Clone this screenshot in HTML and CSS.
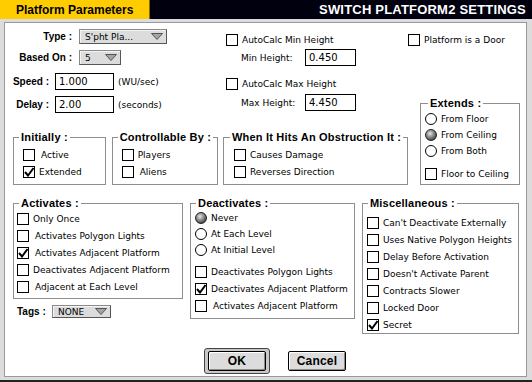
FILE: index.html
```html
<!DOCTYPE html>
<html lang="en">

<head>
    <meta charset="UTF-8" />
    <meta name="viewport" content="width=device-width, initial-scale=1.0" />
    <title>Switch Platform2 Settings</title>
    <link rel="stylesheet" href="styles.css">
</head>

<body>
    <div class="window">
        <!-- title bar -->
        <div class="titlebar">
            <div class="tab">Platform Parameters</div>
            <div class="title">SWITCH PLATFORM2 SETTINGS</div>
        </div>

        <div class="panel">
            <div class="top">
                <div class="top-main">
                    <div class="top-row">
                        <!-- type / speed fields -->
                        <div class="fields">
                            <div class="field field-type">
                                <span class="label label-popup">Type :</span>
                                <span class="popup popup-type">S'pht Pla...
                                    <svg class="arrow" width="12" height="7" viewBox="0 0 12 7"><polygon points="0.5,0.5 11.5,0.5 6,6.5" /></svg>
                                </span>
                            </div>
                            <div class="field field-based">
                                <span class="label label-popup">Based On :</span>
                                <span class="popup popup-based">5
                                    <svg class="arrow" width="12" height="7" viewBox="0 0 12 7"><polygon points="0.5,0.5 11.5,0.5 6,6.5" /></svg>
                                </span>
                            </div>
                            <div class="field field-speed">
                                <span class="label label-input">Speed :</span>
                                <span class="input input-speed">1.000</span>
                                <span class="unit">(WU/sec)</span>
                            </div>
                            <div class="field field-delay">
                                <span class="label label-input">Delay :</span>
                                <span class="input input-speed">2.00</span>
                                <span class="unit">(seconds)</span>
                            </div>
                        </div>

                        <!-- min / max heights -->
                        <div class="heights">
                            <div class="item"><span class="box"></span>AutoCalc Min Height</div>
                            <div class="height-row height-min">
                                <span class="height-label">Min Height:</span>
                                <span class="input input-height">0.450</span>
                            </div>
                            <div class="item item-max"><span class="box"></span>AutoCalc Max Height</div>
                            <div class="height-row height-max">
                                <span class="height-label">Max Height:</span>
                                <span class="input input-height">4.450</span>
                            </div>
                        </div>
                    </div>

                    <div class="groups">
                        <div class="group group-initially">
                            <div class="group-title">Initially :</div>
                            <div class="group-body">
                                <div class="item"><span class="box"></span><span class="pad">Active</span></div>
                                <div class="item"><span class="box checked"><svg width="10" height="10" viewBox="0 0 10 10"><path d="M1 5 L4 8.5 L9.5 1" /></svg></span>Extended</div>
                            </div>
                        </div>
                        <div class="group group-control">
                            <div class="group-title">Controllable By :</div>
                            <div class="group-body">
                                <div class="item"><span class="box"></span>Players</div>
                                <div class="item"><span class="box"></span><span class="pad">Aliens</span></div>
                            </div>
                        </div>
                        <div class="group group-obstruction">
                            <div class="group-title">When It Hits An Obstruction It :</div>
                            <div class="group-body">
                                <div class="item"><span class="box"></span>Causes Damage</div>
                                <div class="item"><span class="box"></span>Reverses Direction</div>
                            </div>
                        </div>
                    </div>
                </div>

                <div class="side">
                    <div class="item"><span class="box"></span>Platform is a Door</div>
                    <div class="group group-extends">
                        <div class="group-title">Extends :</div>
                        <div class="group-body">
                            <div class="item item-radio"><span class="radio"></span>From Floor</div>
                            <div class="item item-radio"><span class="radio on"></span>From Ceiling</div>
                            <div class="item item-radio"><span class="radio"></span>From Both</div>
                            <div class="item item-gap"><span class="box"></span>Floor to Ceiling</div>
                        </div>
                    </div>
                </div>
            </div>

            <div class="bottom">
                <div class="act-col">
                    <div class="group group-activates">
                        <div class="group-title">Activates :</div>
                        <div class="group-body">
                            <div class="item"><span class="box"></span>Only Once</div>
                            <div class="item"><span class="box"></span><span class="pad">Activates Polygon Lights</span></div>
                            <div class="item"><span class="box checked"><svg width="10" height="10" viewBox="0 0 10 10"><path d="M1 5 L4 8.5 L9.5 1" /></svg></span><span class="pad">Activates Adjacent Platform</span></div>
                            <div class="item"><span class="box"></span>Deactivates Adjacent Platform</div>
                            <div class="item"><span class="box"></span><span class="pad">Adjacent at Each Level</span></div>
                        </div>
                    </div>
                    <div class="field field-tags">
                        <span class="label">Tags :</span>
                        <span class="popup popup-tags">NONE
                            <svg class="arrow" width="12" height="7" viewBox="0 0 12 7"><polygon points="0.5,0.5 11.5,0.5 6,6.5" /></svg>
                        </span>
                    </div>
                </div>

                <div class="group group-deactivates">
                    <div class="group-title">Deactivates :</div>
                    <div class="group-body">
                        <div class="item item-radio"><span class="radio on"></span>Never</div>
                        <div class="item item-radio"><span class="radio"></span>At Each Level</div>
                        <div class="item item-radio"><span class="radio"></span>At Initial Level</div>
                        <div class="item item-gap"><span class="box"></span>Deactivates Polygon Lights</div>
                        <div class="item"><span class="box checked"><svg width="10" height="10" viewBox="0 0 10 10"><path d="M1 5 L4 8.5 L9.5 1" /></svg></span>Deactivates Adjacent Platform</div>
                        <div class="item"><span class="box"></span><span class="pad">Activates Adjacent Platform</span></div>
                    </div>
                </div>

                <div class="group group-misc">
                    <div class="group-title">Miscellaneous :</div>
                    <div class="group-body">
                        <div class="item"><span class="box"></span>Can't Deactivate Externally</div>
                        <div class="item"><span class="box"></span>Uses Native Polygon Heights</div>
                        <div class="item"><span class="box"></span>Delay Before Activation</div>
                        <div class="item"><span class="box"></span>Doesn't Activate Parent</div>
                        <div class="item"><span class="box"></span>Contracts Slower</div>
                        <div class="item"><span class="box"></span>Locked Door</div>
                        <div class="item"><span class="box checked"><svg width="10" height="10" viewBox="0 0 10 10"><path d="M1 5 L4 8.5 L9.5 1" /></svg></span>Secret</div>
                    </div>
                </div>
            </div>

            <!-- buttons -->
            <div class="buttons">
                <span class="btn-ring"><button class="btn btn-ok">OK</button></span>
                <button class="btn btn-cancel">Cancel</button>
            </div>
        </div>
    </div>
</body>

</html>
```

FILE: styles.css
```css
body {
    margin: 0;
    background: #fff;
    font-family: "DejaVu Sans", sans-serif;
    font-size: 9px;
    color: #000;
}

.window {
    width: 532px;
    height: 382px;
    box-sizing: border-box;
    background: #dcdcdc;
    border-bottom: 2px solid #222;
}

/* title bar */
.titlebar {
    display: flex;
    height: 19px;
    background: #00000f;
}

.tab {
    width: 150px;
    box-sizing: border-box;
    padding-left: 16px;
    background: #ffcc00;
    border-right: 1px solid #8a6d00;
    font: bold 12px "Liberation Sans", Arial, sans-serif;
    line-height: 20px;
}

.title {
    flex: 1;
    padding-right: 6px;
    text-align: right;
    color: #fff;
    font: bold 13px "Liberation Sans", Arial, sans-serif;
    letter-spacing: 0.2px;
    line-height: 20px;
}

.panel {
    width: 523px;
    height: 355px;
    box-sizing: border-box;
    margin: 3px 0 0 4px;
    border: 1px solid #999;
    background: #fff;
}

/* bold labels */
.label,
.group-title,
.btn {
    font: bold 11px "Liberation Sans", Arial, sans-serif;
    letter-spacing: 0.2px;
}

.label {
    flex: none;
    font-size: 10px;
    letter-spacing: 0;
    white-space: nowrap;
}

/* top area */
.top {
    display: flex;
    align-items: flex-start;
}

.top-main {
    width: 403px;
}

.top-row {
    display: flex;
    align-items: flex-start;
}

.fields {
    width: 214px;
    margin: 6px 0 0 7px;
}

.field {
    display: flex;
    align-items: center;
}

.field-type { height: 15px; }
.field-based { height: 15px; margin-top: 6px; }
.field-speed { height: 17px; margin-top: 8px; }
.field-delay { height: 17px; margin-top: 6px; }

.label-popup {
    width: 60px;
    margin-right: 7px;
    text-align: right;
}

.label-input {
    width: 37px;
    margin-right: 6px;
    text-align: right;
}

.unit {
    margin-left: 4px;
}

.popup {
    display: flex;
    align-items: center;
    justify-content: space-between;
    height: 15px;
    box-sizing: border-box;
    padding: 0 3px 0 5px;
    background: #dcdcdc;
    border: 1px solid #8a8a8a;
    border-right-color: #555;
    border-bottom-color: #555;
    box-shadow: inset 1px 1px 0 #f4f4f4;
}

.popup-type { width: 88px; }
.popup-based { width: 42px; }
.popup-tags { width: 59px; height: 13px; }

.arrow polygon {
    fill: #a4a4a4;
    stroke: #555;
    stroke-width: 1;
}

.input {
    display: flex;
    align-items: center;
    height: 17px;
    box-sizing: border-box;
    padding-left: 3px;
    border: 1px solid #000;
    font-size: 10px;
}

.input-speed { width: 59px; }
.input-height { width: 51px; }

.heights {
    width: 182px;
    margin-top: 11px;
}

.height-row {
    display: flex;
    align-items: center;
    height: 17px;
    margin-left: 15px;
}

.height-min { margin-top: 3px; }
.item.item-max { margin-top: 12px; }
.height-max { margin-top: 4px; }

.height-label {
    width: 64px;
}

/* checkbox / radio rows */
.item {
    display: flex;
    align-items: center;
    gap: 4px;
    height: 12px;
    white-space: nowrap;
}

.item + .item {
    margin-top: 5px;
}

.item-radio + .item-radio {
    margin-top: 4px;
}

.item.item-gap {
    margin-top: 11px;
}

.pad {
    margin-left: 2px;
}

.box {
    display: flex;
    align-items: center;
    justify-content: center;
    flex: 0 0 12px;
    width: 12px;
    height: 12px;
    box-sizing: border-box;
    border: 1px solid #000;
    background: #fff;
}

.box svg path {
    fill: none;
    stroke: #000;
    stroke-width: 2;
}

.radio {
    flex: 0 0 12px;
    width: 12px;
    height: 12px;
    box-sizing: border-box;
    border: 1px solid #000;
    border-radius: 50%;
    background: #fff;
}

.radio.on {
    border-color: #222;
    background: radial-gradient(circle at 40% 35%, #e8e8e8 0, #9a9a9a 35%, #4a4a4a 75%, #222 100%);
}

/* group boxes */
.group {
    box-sizing: border-box;
    border: 1px solid #8e8e8e;
}

.group-title {
    width: fit-content;
    margin: -8px 0 0 5px;
    padding: 0 2px;
    background: #fff;
    line-height: 14px;
    white-space: nowrap;
}

.groups {
    display: flex;
    margin: 24px 0 0 8px;
}

.group-initially {
    width: 95px;
    height: 48px;
    padding-left: 9px;
}

.group-control {
    width: 109px;
    height: 48px;
    margin-left: 6px;
    padding-left: 9px;
}

.group-obstruction {
    flex: 0 0 185px;
    height: 48px;
    margin-left: 5px;
    padding-left: 10px;
}

.group-initially .group-title,
.group-control .group-title,
.group-obstruction .group-title {
    margin-left: -4px;
}

.groups .group-body {
    padding-top: 5px;
}

.side {
    width: 111px;
    margin-top: 11px;
}

.group-extends {
    width: 100px;
    height: 82px;
    margin: 57px 0 0 12px;
    padding-left: 4px;
}

.group-extends .group-title {
    margin-left: 3px;
}

.group-extends .group-body {
    padding-top: 3px;
}

/* bottom area */
.bottom {
    display: flex;
    align-items: flex-start;
    margin-top: 18px;
}

.act-col {
    width: 170px;
    margin-left: 8px;
}

.group-activates {
    height: 96px;
    padding-left: 3px;
}

.group-activates .group-title {
    margin-left: 2px;
}

.group-activates .group-body {
    padding-top: 3px;
}

.field-tags {
    height: 13px;
    margin: 6px 0 0 4px;
}

.field-tags .label {
    width: 31px;
    margin-right: 4px;
}

.group-deactivates {
    width: 165px;
    height: 116px;
    margin-left: 7px;
    padding-left: 4px;
}

.group-deactivates .group-title {
    margin-left: 1px;
}

.group-deactivates .group-body {
    padding-top: 2px;
}

.group-deactivates .item.item-gap {
    margin-top: 10px;
}

.group-misc {
    width: 157px;
    height: 131px;
    margin-left: 7px;
    padding-left: 4px;
}

.group-misc .group-title {
    margin-left: 1px;
}

.group-misc .group-body {
    padding-top: 7px;
}

/* buttons */
.buttons {
    display: flex;
    align-items: center;
    margin-top: 14px;
    padding-left: 199px;
}

.btn {
    height: 20px;
    padding: 0;
    font-size: 12px;
    color: #000;
    background: #dcdcdc;
    border: 1px solid #000;
    border-radius: 2px;
    box-shadow: inset 1px 1px 0 #fff, inset -1px -1px 0 #8a8a8a;
}

.btn-ring {
    display: flex;
    padding: 2px 3px;
    border: 1px solid #444;
    border-radius: 3px;
    background: #c8c8c8;
}

.btn-ok {
    width: 58px;
}

.btn-cancel {
    width: 58px;
    margin-left: 18px;
}
```
